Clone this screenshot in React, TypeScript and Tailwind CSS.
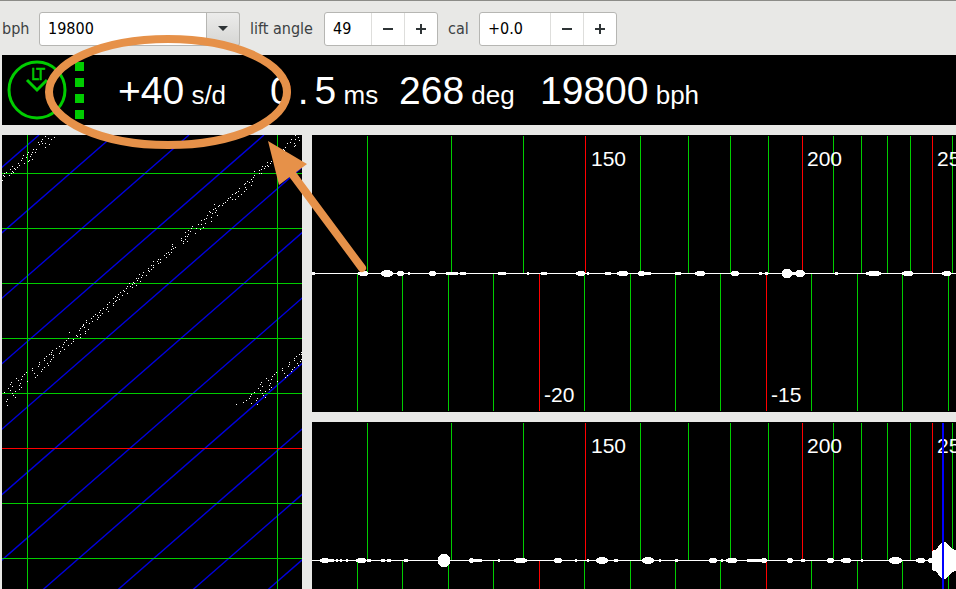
import { useState } from "react";

type Tick = { x: number; major?: boolean };
type Blob = [start: number, end: number, half: number];

const GREEN = "#00cc00";
const RED = "#ff0000";
const ORANGE = "#e69149";

const upperTicks: Tick[] = [
  { x: 55 }, { x: 139 }, { x: 211 }, { x: 273, major: true },
  { x: 328 }, { x: 376 }, { x: 418 }, { x: 456 }, { x: 490, major: true },
  { x: 521 }, { x: 549 }, { x: 575 }, { x: 598 }, { x: 620, major: true }, { x: 640 },
];

const lowerTicks: Tick[] = [
  { x: 45 }, { x: 90 }, { x: 136 }, { x: 181 }, { x: 227, major: true },
  { x: 272 }, { x: 318 }, { x: 363 }, { x: 408 }, { x: 454, major: true },
  { x: 499 }, { x: 545 }, { x: 590 }, { x: 636 },
];

const ticBlobs: Blob[] = [
  [0, 3, 1], [46, 56, 2], [69, 81, 3], [85, 92, 2], [96, 98, 1], [117, 124, 2],
  [134, 146, 1], [148, 154, 1], [186, 194, 1], [215, 217, 1], [229, 235, 1],
  [264, 273, 2], [275, 277, 1], [293, 299, 1], [305, 316, 2], [326, 333, 2],
  [333, 339, 1], [363, 369, 1], [383, 393, 2], [419, 427, 2], [447, 450, 1],
  [453, 456, 1], [470, 480, 4], [480, 483, 1], [483, 493, 3], [523, 526, 1],
  [554, 569, 2], [590, 601, 2], [630, 639, 2],
];

const tocBlobs: Blob[] = [
  [8, 17, 2], [17, 22, 1], [24, 26, 1], [28, 30, 1], [34, 36, 1], [44, 54, 2],
  [55, 59, 1], [69, 73, 1], [75, 79, 1], [92, 96, 1], [126, 138, 6], [157, 161, 2],
  [161, 170, 1], [186, 188, 1], [202, 215, 2], [242, 250, 2], [263, 265, 1],
  [275, 277, 1], [284, 296, 3], [302, 306, 1], [330, 342, 3], [347, 349, 1],
  [363, 366, 1], [397, 405, 2], [409, 411, 1], [414, 425, 2], [435, 455, 1],
  [449, 454, 2], [475, 481, 2], [489, 493, 1], [515, 522, 2], [529, 539, 2],
  [549, 551, 1], [577, 590, 3], [604, 613, 2], [616, 621, 2],
];

// x,y pairs of the beat trace
const traceDots = `
43,1 40,4 46,3 52,2 49,4 39,6 36,7 37,9 40,8 43,8 43,12 47,9 34,14 31,14 33,17 30,17
29,19 26,17 25,19 21,20 24,22 28,21 27,25 30,24 26,26 22,28 19,25 20,23 17,30 16,28
15,32 13,34 10,31 12,33 8,34 10,36 11,37 7,40 9,38 2,38 4,37 1,40 2,41 0,45
293,0 296,2 297,5 293,4 289,4 288,7 285,8 292,8 293,10 292,11 283,12 282,15 281,14
269,26 268,28 265,27 266,31 263,31 265,30 260,31 259,34 262,33 257,35 259,38 252,36
252,40 257,38 251,42 249,44 250,46 249,50 247,47 245,46 243,48 243,52 244,54 242,56
242,49 237,53 236,56 234,57 239,59 236,61 233,64 233,58 230,59 230,64 228,62 226,63
225,65 223,67 221,68 220,70 217,70 216,71 213,73 214,75 213,77 215,80 211,74 212,69
208,77 210,78 207,76 205,80 209,82 209,86 204,83 202,84 203,88 199,85 199,89 201,92
198,94 196,89 194,93 190,91 193,98 189,93 188,96 186,95 186,99 183,101 185,101 183,97
179,103 183,104 181,106 181,108 185,106 179,105 173,112 170,109 170,111 171,113 169,114
166,117 169,117 167,119 164,118 162,120 164,122 156,124 158,124 158,127 155,126 156,128
151,126 151,130 149,130 149,134 151,132 146,135 147,136 144,140 141,137 146,133 140,140
137,139 139,142 138,146 135,145 136,143 134,143 132,148 130,149 131,147 127,148 128,151
134,150 130,152 125,151 124,153 125,158 121,155 122,156 118,157 120,160 116,159 117,164
115,162 113,161 111,163 114,165 113,166 111,168 111,170 107,167 105,169 105,172 106,176
104,174 101,173 98,175 97,177 100,178 98,180 95,180 96,182 95,184 93,179 91,181 89,183
90,186 87,188 84,185 84,187 81,189 81,190 80,191 82,192 78,193 86,194 77,195 83,196
83,198 78,199 78,202 74,200 75,201 67,197 66,203 71,204 71,206 64,205 69,208 62,207
66,210 61,209 57,211 60,212 62,214 54,213 58,216 57,218 50,215 49,217 49,219 47,219
51,220 51,222 44,221 42,223 42,225 49,224 48,226 45,228 46,230 37,227 37,229 36,231
42,232 40,234 39,236 30,233 30,235 32,238 35,240 33,242 24,237 22,239 20,241 25,246
14,243 19,244 16,245 18,248 17,250 19,252 17,254 9,247 8,249 10,251 6,253 8,255 13,256
2,257 10,258 11,260 13,262 5,264 4,266 5,270
300,215 299,217 299,219 297,219 294,221 292,223 292,225 299,224 298,226 295,228 296,230
287,227 287,229 286,231 292,232 290,234 289,236 280,233 280,235 282,238 285,240 283,242
274,237 272,239 270,241 275,246 264,243 269,244 266,245 268,248 267,250 269,252 267,254
259,247 258,249 260,251 256,253 258,255 263,256 252,257 260,258 261,260 263,262 234,269
241,267 244,265 247,263 248,261 249,259 249,268 254,265 255,263 255,269
`
  .trim()
  .split(/\s+/)
  .map((pair) => pair.split(",").map(Number));

function blobPoints([start, end, half]: Blob) {
  const inset = half === 1 ? 0 : Math.floor((end - start) / 3);
  const shoulder = half === 1 ? 0 : Math.ceil(half / 2);
  const top = 138 - half;
  const bottom = 139 + half;
  return [
    [start, top + shoulder], [start + inset, top], [end - inset, top], [end, top + shoulder],
    [end, bottom - shoulder], [end - inset, bottom], [start + inset, bottom], [start, bottom - shoulder],
  ]
    .map((p) => p.join(","))
    .join(" ");
}

function Waveform({ label, blobs, lowerLabels, pulse }: {
  label: string;
  blobs: Blob[];
  lowerLabels?: boolean;
  pulse?: boolean;
}) {
  return (
    <div className="min-h-0 overflow-hidden bg-black">
      <svg
        role="img"
        aria-label={label}
        className="h-full w-full font-['Liberation_Sans',Arial,sans-serif] text-[21px]"
        fill="#fff"
      >
        <g shapeRendering="crispEdges">
          {upperTicks.map((t) => (
            <rect key={t.x} x={t.x} y="1" width="1" height="137" fill={t.major ? RED : GREEN} />
          ))}
          {lowerTicks.map((t) => (
            <rect key={t.x} x={t.x} y="139" width="1" height="137" fill={t.major ? RED : GREEN} />
          ))}
          <rect x="0" y="138" width="100%" height="1" />
          {blobs.map((b) => (
            <polygon key={b.join()} points={blobPoints(b)} />
          ))}
          {pulse && (
            <polygon points="620,129 625,127 628,122 630,120 634,120 637,124 640,127 644,128 644,149 640,150 637,153 634,157 630,157 628,155 625,150 620,148" />
          )}
        </g>
        <text x="279" y="31">150</text>
        <text x="495" y="31">200</text>
        <text x="625" y="31">250</text>
        {lowerLabels && (
          <>
            <text x="232" y="267">-20</text>
            <text x="459" y="267">-15</text>
          </>
        )}
        {pulse && <rect x="630" y="1" width="2" height="100%" fill="#0000ff" />}
      </svg>
    </div>
  );
}

function BeatTrace() {
  return (
    <div className="min-h-0 w-[300px] shrink-0 overflow-hidden bg-black">
      <svg role="img" aria-label="Beat trace" className="h-full w-full" shapeRendering="crispEdges">
        <g stroke="#0000dd" strokeWidth="1.4" shapeRendering="auto">
          {Array.from({ length: 14 }, (_, i) => {
            const x = 37 + i * 75;
            return <line key={i} x1={x} y1="0" x2={x - 1146} y2="1000" />;
          })}
        </g>
        <g fill={GREEN}>
          <rect x="25" y="0" width="1" height="100%" />
          <rect x="275" y="0" width="1" height="100%" />
          {[38, 93, 148, 203, 258, 313, 368, 423].map((y) => (
            <rect key={y} x="0" y={y} width="100%" height="1" fill={y === 313 ? RED : GREEN} />
          ))}
        </g>
        <g fill="#fff">
          {traceDots.map(([x, y], i) => (
            <rect key={i} x={x} y={y} width="1" height="1" />
          ))}
        </g>
      </svg>
    </div>
  );
}

function Spin({ id, value, inputClass, onStep, onChange }: {
  id: string;
  value: string;
  inputClass: string;
  onStep: (direction: number) => void;
  onChange: (value: string) => void;
}) {
  const button =
    "flex w-[33px] items-center justify-center border-l border-[#dededc] text-[#2e3436] hover:bg-gray-100";
  return (
    <div className="flex h-[34px] rounded-[3px] border border-[#b6b6b3] bg-white">
      <input
        id={id}
        value={value}
        onChange={(e) => onChange(e.target.value)}
        className={`${inputClass} bg-transparent pl-2 text-black outline-none`}
      />
      <button type="button" aria-label={`Decrease ${id}`} className={button} onClick={() => onStep(-1)}>
        <svg width="12" height="12" fill="currentColor" shapeRendering="crispEdges">
          <rect x="1" y="5" width="10" height="2" />
        </svg>
      </button>
      <button type="button" aria-label={`Increase ${id}`} className={button} onClick={() => onStep(1)}>
        <svg width="12" height="12" fill="currentColor" shapeRendering="crispEdges">
          <rect x="1" y="5" width="10" height="2" />
          <rect x="5" y="1" width="2" height="10" />
        </svg>
      </button>
    </div>
  );
}

function Toolbar() {
  const [bph, setBph] = useState("19800");
  const [lift, setLift] = useState("49");
  const [cal, setCal] = useState("+0.0");

  const stepCal = (d: number) => {
    const next = Number(cal) + d / 10;
    setCal((next < 0 ? "" : "+") + next.toFixed(1));
  };

  return (
    <div className="flex h-[55px] shrink-0 items-center border-t border-[#8c8c88] pl-[2px] pt-[1px] font-['DejaVu_Sans_Condensed','DejaVu_Sans',sans-serif] text-base text-[#3c4143]">
      <label htmlFor="bph" className="w-[37px]">bph</label>
      <div className="relative h-[34px] w-[201px]">
        <select
          id="bph"
          value={bph}
          onChange={(e) => setBph(e.target.value)}
          className="h-full w-full appearance-none rounded-[3px] border border-[#b6b6b3] bg-white pl-2 text-black outline-none"
        >
          <option>18000</option>
          <option>19800</option>
          <option>21600</option>
          <option>28800</option>
        </select>
        <span className="pointer-events-none absolute inset-y-0 right-0 flex w-[34px] items-center justify-center rounded-r-[3px] border border-[#b6b6b3] bg-gradient-to-b from-[#ececeb] to-[#d6d6d4]">
          <svg width="10" height="5" fill="#2e3436">
            <path d="M0 0h10L5 5z" />
          </svg>
        </span>
      </div>
      <label htmlFor="lift" className="w-[84px] pl-[10px] whitespace-nowrap">lift angle</label>
      <Spin
        id="lift"
        value={lift}
        inputClass="w-[46px]"
        onChange={setLift}
        onStep={(d) => setLift(String(Number(lift) + d))}
      />
      <label htmlFor="cal" className="w-[41px] pl-[10px]">cal</label>
      <Spin id="cal" value={cal} inputClass="w-[70px]" onChange={setCal} onStep={stepCal} />
    </div>
  );
}

function Readout() {
  return (
    <div className="flex h-[70px] shrink-0 items-center bg-black font-['Liberation_Sans',Arial,sans-serif] text-[39px] leading-[64px] whitespace-nowrap text-white">
      <svg width="84" height="70" className="shrink-0" fill="none" stroke={GREEN}>
        <circle cx="35" cy="35" r="28" strokeWidth="3" />
        <path d="M25 25l10 10 10-10" strokeWidth="3" />
        <text
          x="36"
          y="25"
          textAnchor="middle"
          fill={GREEN}
          stroke={GREEN}
          strokeWidth="0.6"
          className="font-['DejaVu_Sans_Condensed','DejaVu_Sans',sans-serif] text-[15px]"
        >
          LT
        </text>
        <g fill={GREEN} stroke="none" shapeRendering="crispEdges">
          <rect x="73" y="7" width="9" height="9" />
          <rect x="73" y="23" width="9" height="9" />
          <rect x="73" y="39" width="9" height="9" />
          <rect x="73" y="55" width="9" height="9" />
        </g>
      </svg>
      <p className="w-[151px] pt-[6px] pl-[32px]">
        +40<span className="text-[26px]"> s/d</span>
      </p>
      <p className="flex w-[162px] gap-[6px] pt-[6px] pl-[33px]">
        <span>0</span>
        <span>.</span>
        <span>
          5<span className="text-[26px]"> ms</span>
        </span>
      </p>
      <p className="w-[141px] pt-[6px]">
        268<span className="text-[26px]"> deg</span>
      </p>
      <p className="pt-[6px]">
        19800<span className="text-[26px]"> bph</span>
      </p>
    </div>
  );
}

export default function App() {
  return (
    <div className="relative flex h-screen flex-col overflow-hidden bg-[#e8e8e6]">
      <Toolbar />
      <main className="flex min-h-0 flex-1 flex-col gap-[10px] pl-[2px]">
        <Readout />
        <div className="flex min-h-0 flex-1 gap-[10px]">
          <BeatTrace />
          <div className="grid min-w-0 flex-1 grid-rows-[277fr_167fr] gap-[10px]">
            <Waveform label="Tic waveform" blobs={ticBlobs} lowerLabels />
            <Waveform label="Toc waveform" blobs={tocBlobs} pulse />
          </div>
        </div>
      </main>

      {/* callout drawn over the rate reading */}
      <svg className="pointer-events-none absolute inset-0 h-full w-full" fill="none" stroke={ORANGE} strokeWidth="8">
        <ellipse cx="168" cy="92" rx="119" ry="53" />
        <path d="M290 171L362 268" strokeLinecap="round" />
        <path d="M268 141l39 23-28 21z" fill={ORANGE} stroke="none" />
      </svg>
    </div>
  );
}
